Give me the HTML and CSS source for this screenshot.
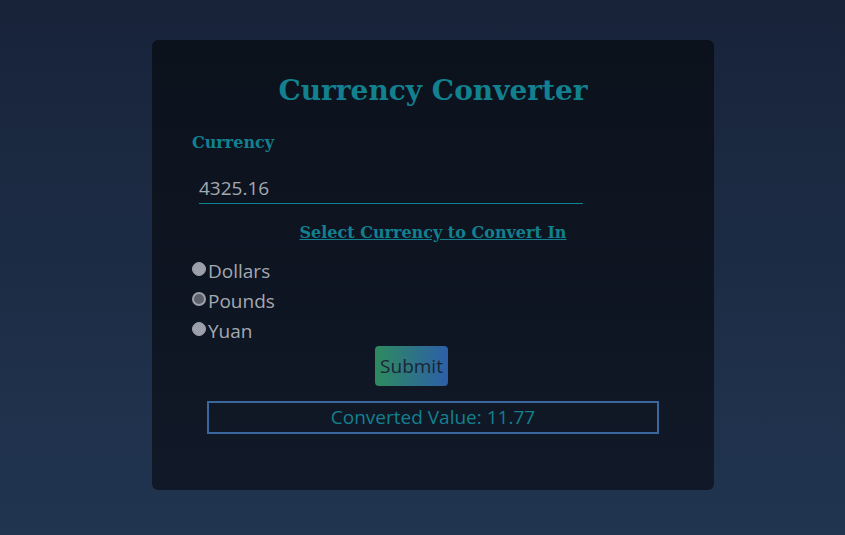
FILE: index.html
```html
<!DOCTYPE html>
<html>
<head>
<meta charset="utf-8">
<link rel="stylesheet" href="styles.css">
</head>
<body>
<div class="card">
  <h1 class="title">Currency Converter</h1>
  <div class="label">Currency</div>
  <div class="input-wrap"><div class="field"><input class="amount" type="text" value="4325.16"></div></div>
  <div class="subhead">Select Currency to Convert In</div>
  <div class="options">
    <label class="opt"><span class="radio"></span>Dollars</label>
    <label class="opt"><span class="radio checked"></span>Pounds</label>
    <label class="opt"><span class="radio"></span>Yuan</label>
  </div>
  <div class="btn-row"><button class="submit">Submit</button></div>
  <div class="result">Converted Value: 11.77</div>
</div>
</body>
</html>
```
FILE: styles.css
```css
html, body { margin: 0; padding: 0; }
body {
  height: 535px;
  background: linear-gradient(180deg, #18233a 0%, #213550 100%);
  font-family: "Open Sans", "Noto Sans", sans-serif;
  display: flex;
  justify-content: center;
  align-items: flex-start;
  padding-top: 40px;
  padding-left: 21px;
  box-sizing: border-box;
}
.card {
  width: 562px;
  height: 450px;
  flex-shrink: 0;
  box-sizing: border-box;
  padding: 0 40px;
  border-radius: 6px;
  background: linear-gradient(180deg, #0b121c 0%, #111827 100%);
  display: flex;
  flex-direction: column;
}
.title {
  font-family: "DejaVu Serif", Georgia, serif;
  font-weight: bold;
  font-size: 28px;
  color: #12808f;
  text-align: center;
  margin: 33px 0 0 0;
  line-height: 36px;
}
.label {
  font-family: "DejaVu Serif", Georgia, serif;
  font-weight: bold;
  font-size: 16px;
  color: #12808f;
  margin-top: 23px;
  line-height: 22px;
}
.input-wrap { margin-top: 20px; padding-left: 7px; }
.field {
  width: 384px;
  border-bottom: 1px solid #0e8597;
}
.amount {
  display: block;
  width: 100%;
  box-sizing: border-box;
  background: transparent;
  border: none;
  color: #a4a8b0;
  font-family: "Open Sans", "Noto Sans", sans-serif;
  font-size: 19px;
  padding: 2px 0 3px 0;
  outline: none;
  line-height: 24px;
}
.subhead {
  font-family: "DejaVu Serif", Georgia, serif;
  font-weight: bold;
  font-size: 16px;
  color: #12808f;
  text-decoration: underline;
  text-align: center;
  margin-top: 17px;
  line-height: 24px;
}
.options { display: flex; flex-direction: column; margin-top: 11px; }
.opt {
  display: flex;
  align-items: center;
  height: 30px;
  color: #a4a8b0;
  font-size: 19px;
}
.radio {
  width: 12px;
  height: 12px;
  border-radius: 50%;
  background: #9ca0aa;
  border: 1px solid #9ca0aa;
  margin-right: 2px;
  margin-top: -4px;
  box-sizing: content-box;
}
.radio.checked {
  background: #5c606a;
  width: 10px; height: 10px;
  border: 2px solid #9ca0aa;
}
.btn-row { display: flex; justify-content: center; padding-right: 43px; }
.submit {
  width: 73px;
  height: 40px;
  border: none;
  border-radius: 4px;
  background: linear-gradient(90deg, #2e8a5e 0%, #2d5fa8 100%);
  color: #1a2535;
  font-family: "Open Sans", "Noto Sans", sans-serif;
  font-size: 19px;
  padding: 0;
}
.result {
  margin: 15px auto 0 auto;
  width: 452px;
  height: 33px;
  box-sizing: border-box;
  border: 2px solid #3b679e;
  color: #12808f;
  font-size: 19px;
  text-align: center;
  line-height: 29px;
}
```
